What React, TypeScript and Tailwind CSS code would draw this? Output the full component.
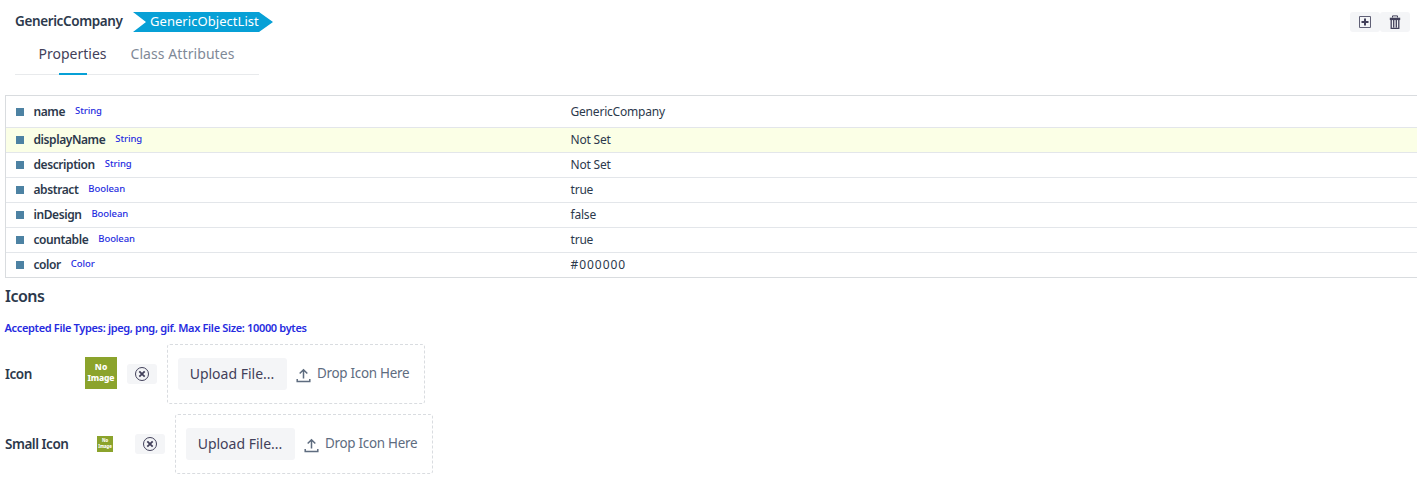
import React from "react";

const rows = [
  { name: "name", type: "String", value: "GenericCompany" },
  { name: "displayName", type: "String", value: "Not Set" },
  { name: "description", type: "String", value: "Not Set" },
  { name: "abstract", type: "Boolean", value: "true" },
  { name: "inDesign", type: "Boolean", value: "false" },
  { name: "countable", type: "Boolean", value: "true" },
  { name: "color", type: "Color", value: "#000000" },
];

function UploadRow({ label, small }: { label: string; small?: boolean }) {
  return (
    <div className="flex h-[60px] items-center">
      <div className={"mb-px origin-left scale-x-[0.965] whitespace-nowrap text-[14px] font-semibold tracking-[-0.5px] " + (small ? "w-[92px]" : "w-[80px]")}>{label}</div>
      <div className={small ? "size-4 bg-[#8ba32c]" : "mb-[2px] size-8 bg-[#8ba32c]"}>
        <svg viewBox="0 0 32 32" className="block size-full" fill="#fff" fontFamily="Noto Sans, sans-serif" fontWeight="800" fontSize="8.5" textAnchor="middle">
          <text x="16" y="12.8" textLength="12.5">No</text>
          <text x="16" y="24.2" textLength="27">Image</text>
        </svg>
      </div>
      <button className={"flex h-5 w-[30px] items-center justify-center rounded-[3px] bg-[#f4f5f7] " + (small ? "ml-[22px]" : "ml-[10px]")}>
        <svg width="14" height="14" viewBox="0 0 14 14" fill="none" stroke="#42405a">
          <circle cx="7" cy="7" r="6.5" strokeWidth="1" />
          <path d="M4.3 4.3 9.7 9.7M9.7 4.3 4.3 9.7" strokeWidth="1.8" />
        </svg>
      </button>
      <div className="ml-[10px] flex h-[60px] w-[258px] items-center rounded-[3px] border border-dashed border-[#d9dce0] pl-[10px]">
        <button className="h-8 w-[109px] rounded-[3px] bg-[#f4f5f7] pr-px pb-[2px] text-[14px] text-[#42405a]">Upload File...</button>
        <svg className="mt-[3px] ml-[9px]" width="15" height="15" viewBox="0 0 15 15" fill="none" stroke="#5e6c7f" strokeWidth="1.5">
          <path d="M7.5 10.5V2M3.7 5.5l3.8-3.8 3.8 3.8M1.2 11v2.5h12.6V11" />
        </svg>
        <span className="mb-[2px] ml-[6px] origin-left scale-x-[0.925] text-[14.5px] tracking-[-0.3px] whitespace-nowrap text-[#5e6c7f]">Drop Icon Here</span>
      </div>
    </div>
  );
}

export default function App() {
  return (
    <div className="h-[482px] w-full overflow-hidden bg-white font-['Noto_Sans',sans-serif] text-[#2c394c]">
      <header className="flex h-8 items-start justify-between pt-3 pr-[7px] pl-[15px]">
        <div className="flex h-5 items-center">
          <h1 className="mb-1 w-[118px] origin-left scale-x-[0.93] text-[14.5px] leading-5 font-semibold tracking-[-0.4px] whitespace-nowrap">GenericCompany</h1>
          <div className="h-5 w-[140px] bg-[#07a0d6] pl-[17px] text-[13px] leading-[19px] tracking-[0.05px] text-white [clip-path:polygon(0_0,126px_0,100%_50%,126px_100%,0_100%,13px_50%)]">GenericObjectList</div>
        </div>
        <div className="flex">
          <button className="flex h-5 w-[30px] items-center justify-center rounded-[3px] bg-[#f4f5f7]">
            <svg width="14" height="14" viewBox="0 0 14 14" fill="none" stroke="#5f5f75">
              <path d="M1.5 1.5h11v11h-11z" />
              <path d="M7 3.5v7M3.5 7h7" stroke="#42405a" strokeWidth="2" />
            </svg>
          </button>
          <button className="flex h-5 w-[30px] items-center justify-center rounded-[3px] bg-[#f4f5f7]">
            <svg width="14" height="14" viewBox="0 0 14 14" fill="none" stroke="#42405a">
              <path d="M4.5 2.5V.9h5v1.6" />
              <path d="M1.8 3.9h10.4" strokeWidth="2.4" />
              <path d="M3.2 4.5v8.8h7.6V4.5M5.7 5v7.5M8.3 5v7.5" strokeWidth="1.3" />
            </svg>
          </button>
        </div>
      </header>
      <nav className="ml-[15px] flex h-[43px] w-[244px] border-b border-[#e8eaec] pl-[23.5px] text-[14px]">
        <div className="relative w-[68px] pt-3 leading-5 whitespace-nowrap text-[#42405a]">
          Properties
          <span className="absolute -bottom-px left-[20.5px] h-0.5 w-7 bg-[#07a0d6]" />
        </div>
        <div className="ml-6 pt-3 leading-5 tracking-[0.08px] whitespace-nowrap text-[#7f8997]">Class Attributes</div>
      </nav>
      <section className="mt-5 ml-[5px] border-y border-l border-[#d9dcdf] text-[12px]">
        {rows.map((r, i) => (
          <div key={r.name} className={"flex items-center border-[#e3e6ea] " + (i === 0 ? "h-8 border-b" : i === 6 ? "h-6" : i === 1 ? "h-[25px] border-b bg-[#fbffe6]" : "h-[25px] border-b")}>
            <div className="flex w-[564.5px] items-center pl-[10px]">
              <span className="size-2 bg-[#4d82a3]" />
              <span className="ml-[9.5px] font-semibold tracking-[-0.42px]">{r.name}</span>
              <span className={"ml-[10px] text-[9.5px] font-medium tracking-[-0.08px] text-[#262be0] " + (i === 0 ? "mb-px" : "mb-[2px]")}>{r.type}</span>
            </div>
            <span className={r.type === "Color" ? "tracking-[0.95px]" : "tracking-[-0.2px]"}>{r.value}</span>
          </div>
        ))}
      </section>
      <h2 className="mt-2 ml-[5px] text-[16px] leading-5 font-semibold tracking-[-0.5px]">Icons</h2>
      <p className="mt-3 ml-[4.5px] text-[11px] leading-5 font-semibold tracking-[-0.34px] text-[#262be0]">Accepted File Types: jpeg, png, gif. Max File Size: 10000 bytes</p>
      <div className="mt-[6px] ml-[5px] flex flex-col gap-[10px]">
        <UploadRow label="Icon" />
        <UploadRow label="Small Icon" small />
      </div>
    </div>
  );
}
